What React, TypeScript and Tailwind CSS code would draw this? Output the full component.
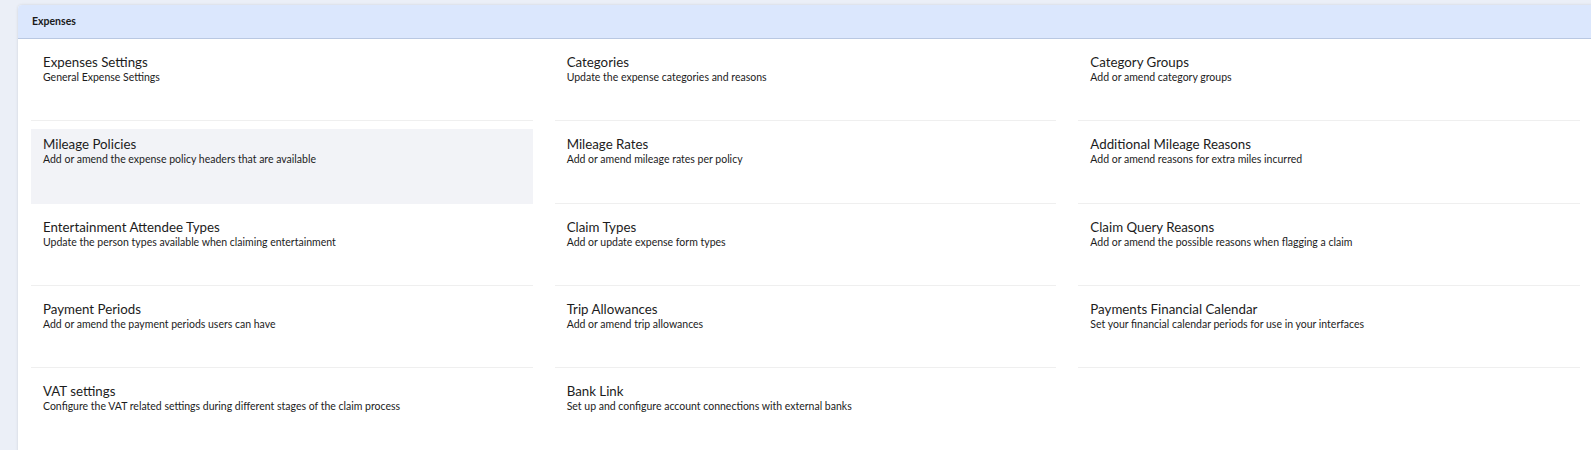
import React from "react";

const items: { title: string; desc: string; active?: boolean }[] = [
  { title: "Expenses Settings", desc: "General Expense Settings" },
  { title: "Categories", desc: "Update the expense categories and reasons" },
  { title: "Category Groups", desc: "Add or amend category groups" },
  { title: "Mileage Policies", desc: "Add or amend the expense policy headers that are available", active: true },
  { title: "Mileage Rates", desc: "Add or amend mileage rates per policy" },
  { title: "Additional Mileage Reasons", desc: "Add or amend reasons for extra miles incurred" },
  { title: "Entertainment Attendee Types", desc: "Update the person types available when claiming entertainment" },
  { title: "Claim Types", desc: "Add or update expense form types" },
  { title: "Claim Query Reasons", desc: "Add or amend the possible reasons when flagging a claim" },
  { title: "Payment Periods", desc: "Add or amend the payment periods users can have" },
  { title: "Trip Allowances", desc: "Add or amend trip allowances" },
  { title: "Payments Financial Calendar", desc: "Set your financial calendar periods for use in your interfaces" },
  { title: "VAT settings", desc: "Configure the VAT related settings during different stages of the claim process" },
  { title: "Bank Link", desc: "Set up and configure account connections with external banks" },
];

export default function App() {
  return (
    <div
      className="w-full min-h-[450px] overflow-hidden bg-[#ebeff7] pt-[5px] pl-[18px]"
      style={{ fontFamily: "Lato, 'Open Sans', sans-serif" }}
    >
      <div className="w-[1575px] bg-white rounded-tl-[4px] shadow-[0_0_3px_rgba(0,0,0,0.12)] pb-2">
        <div className="h-[34px] bg-[#dbe7fd] border-b border-[#b9c8e2] rounded-tl-[4px] flex items-center pl-[14px]">
          <span className="text-[10.5px] font-bold text-[#1a1a1a]">Expenses</span>
        </div>
        <div className="px-[13px] grid grid-cols-3 gap-x-[22px]">
          {items.map((it) => (
            <div
              key={it.title}
              className={
                "mt-2 h-[74.33px] px-3 pt-[7px] border-b " +
                (it.active ? "bg-[#f2f3f7] border-[#f2f3f7]" : "border-[#efefef]")
              }
            >
              <div className="text-[13.3px] leading-[16px] text-[#1c1c1c]">{it.title}</div>
              <div className="text-[10.5px] leading-[14px] text-[#1c1c1c]">{it.desc}</div>
            </div>
          ))}
        </div>
      </div>
    </div>
  );
}
